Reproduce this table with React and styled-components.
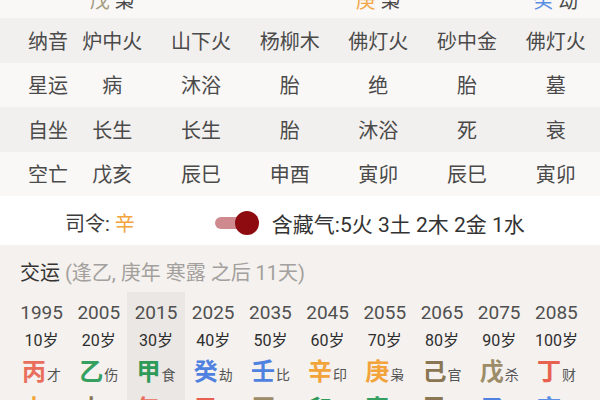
import React from 'react';
import styled, { createGlobalStyle } from 'styled-components';

const Global = createGlobalStyle`
  html, body { margin: 0; padding: 0; }
  body {
    width: 600px; height: 400px; overflow: hidden;
    background: #faf8f6;
    font-family: Roboto, "Noto Sans CJK SC", sans-serif;
  }
`;

const Page = styled.div`
  width: 600px;
  height: 400px;
  overflow: hidden;
  display: flex;
  flex-direction: column;
`;

const Row = styled.div`
  flex-shrink: 0;
  display: grid;
  grid-template-columns: 40px repeat(6, 1fr);
  align-items: center;
  padding-left: 28px;
  height: ${(p) => p.$h || 44.5}px;
  margin-top: ${(p) => p.$mt || 0}px;
  background: ${(p) => (p.$shade ? '#f2f0ee' : '#faf8f6')};
  color: #4a4a4a;
  font-size: 20px;
`;

const Label = styled.div`
  white-space: nowrap;
`;

const Cell = styled.div`
  text-align: center;
  white-space: nowrap;
`;

const Tint = styled.span`
  color: ${(p) => p.$c};
`;

const SilingRow = styled.div`
  flex-shrink: 0;
  height: 49px;
  background: #ffffff;
  display: flex;
  align-items: center;
  padding: 4px 0 0 65px;
  box-sizing: border-box;
  font-size: 20px;
  color: #3c3c3c;
`;

const Siling = styled.div`
  white-space: nowrap;
`;

const Toggle = styled.div`
  position: relative;
  width: 44px;
  height: 24px;
  margin-left: 80px;
  display: flex;
  align-items: center;
`;

const Track = styled.div`
  width: 36px;
  height: 12px;
  border-radius: 6px;
  background: #cf8a90;
`;

const Knob = styled.div`
  position: absolute;
  left: 20px;
  top: 0;
  width: 24px;
  height: 24px;
  border-radius: 50%;
  background: #8e0b10;
`;

const Hidden = styled.div`
  margin-left: 13px;
  font-size: 21px;
  white-space: nowrap;
  color: #333;
`;

const Section = styled.div`
  flex: 1;
  background: #f4f1ee;
  display: flex;
  flex-direction: column;
`;

const Header = styled.div`
  padding: 16px 20px 7px;
  line-height: 24px;
  font-size: 20px;
  color: #333;
  white-space: nowrap;
`;

const Note = styled.span`
  color: #a3a09d;
`;

const YearGrid = styled.div`
  display: grid;
  grid-template-columns: repeat(10, 1fr);
  padding: 0 15px 0 13px;
`;

const Col = styled.div`
  display: flex;
  flex-direction: column;
  align-items: center;
  padding-top: 8px;
  height: 130px;
  background: ${(p) => (p.$active ? '#ebe7e4' : 'transparent')};
`;

const Year = styled.div`
  line-height: 26px;
  font-size: 19px;
  color: #505050;
`;

const Age = styled.div`
  margin-top: 2px;
  line-height: 26px;
  font-size: 16px;
  color: #2e2e2e;
`;

const Pillar = styled.div`
  height: 34px;
  margin-top: ${(p) => p.$mt || 0}px;
  display: flex;
  align-items: baseline;
  justify-content: center;
  line-height: 34px;
  white-space: nowrap;
`;

const Big = styled.span`
  font-size: 24px;
  font-weight: 700;
  color: ${(p) => p.$c};
`;

const Small = styled.span`
  font-size: 14px;
  color: #555;
  margin-left: 1px;
`;

const C = {
  fireRed: '#e96e5c',
  red: '#e8604f',
  green: '#35a05f',
  green2: '#2e9a58',
  blue: '#4f82e0',
  orange: '#f2a43a',
  brown: '#8a7652',
  olive: '#9c8c68',
};

const rows = [
  { label: '纳音', cells: ['炉中火', '山下火', '杨柳木', '佛灯火', '砂中金', '佛灯火'], shade: true },
  { label: '星运', cells: ['病', '沐浴', '胎', '绝', '胎', '墓'] },
  { label: '自坐', cells: ['长生', '长生', '胎', '沐浴', '死', '衰'], shade: true },
  { label: '空亡', cells: ['戊亥', '辰巳', '申酉', '寅卯', '辰巳', '寅卯'] },
];

const yun = [
  { y: 1995, a: '10岁', s: '丙', sc: C.fireRed, g: '才', b: '申', bc: C.orange, bg: '枭' },
  { y: 2005, a: '20岁', s: '乙', sc: C.green, g: '伤', b: '未', bc: C.brown, bg: '官' },
  { y: 2015, a: '30岁', s: '甲', sc: C.green2, g: '食', b: '午', bc: C.fireRed, bg: '财', active: true },
  { y: 2025, a: '40岁', s: '癸', sc: C.blue, g: '劫', b: '巳', bc: C.red, bg: '才' },
  { y: 2035, a: '50岁', s: '壬', sc: C.blue, g: '比', b: '辰', bc: C.olive, bg: '杀' },
  { y: 2045, a: '60岁', s: '辛', sc: C.orange, g: '印', b: '卯', bc: C.green2, bg: '伤' },
  { y: 2055, a: '70岁', s: '庚', sc: C.orange, g: '枭', b: '寅', bc: C.green, bg: '食' },
  { y: 2065, a: '80岁', s: '己', sc: C.brown, g: '官', b: '丑', bc: C.brown, bg: '官' },
  { y: 2075, a: '90岁', s: '戊', sc: C.olive, g: '杀', b: '子', bc: C.blue, bg: '劫' },
  { y: 2085, a: '100岁', s: '丁', sc: C.red, g: '财', b: '亥', bc: '#5b8fe6', bg: '比' },
];

export default function App() {
  return (
    <Page>
      <Global />
      <Row $h={38} $mt={-20}>
        <Label />
        <Cell><Tint $c="#a39c82">戊</Tint> 枭</Cell>
        <Cell />
        <Cell />
        <Cell><Tint $c="#f2a84a">庚</Tint> 枭</Cell>
        <Cell />
        <Cell><Tint $c="#5a8fe2">癸</Tint> 劫</Cell>
      </Row>
      {rows.map((r) => (
        <Row key={r.label} $shade={r.shade}>
          <Label>{r.label}</Label>
          {r.cells.map((c, i) => (
            <Cell key={i}>{c}</Cell>
          ))}
        </Row>
      ))}
      <SilingRow>
        <Siling>司令: <Tint $c="#f2a43a">辛</Tint></Siling>
        <Toggle>
          <Track />
          <Knob />
        </Toggle>
        <Hidden>含藏气:5火 3土 2木 2金 1水</Hidden>
      </SilingRow>
      <Section>
        <Header>
          交运 <Note>(逢乙, 庚年 寒露 之后 11天)</Note>
        </Header>
        <YearGrid>
          {yun.map((d) => (
            <Col key={d.y} $active={d.active}>
              <Year>{d.y}</Year>
              <Age>{d.a}</Age>
              <Pillar $mt={1}>
                <Big $c={d.sc}>{d.s}</Big>
                <Small>{d.g}</Small>
              </Pillar>
              <Pillar $mt={3}>
                <Big $c={d.bc}>{d.b}</Big>
                <Small>{d.bg}</Small>
              </Pillar>
            </Col>
          ))}
        </YearGrid>
      </Section>
    </Page>
  );
}
